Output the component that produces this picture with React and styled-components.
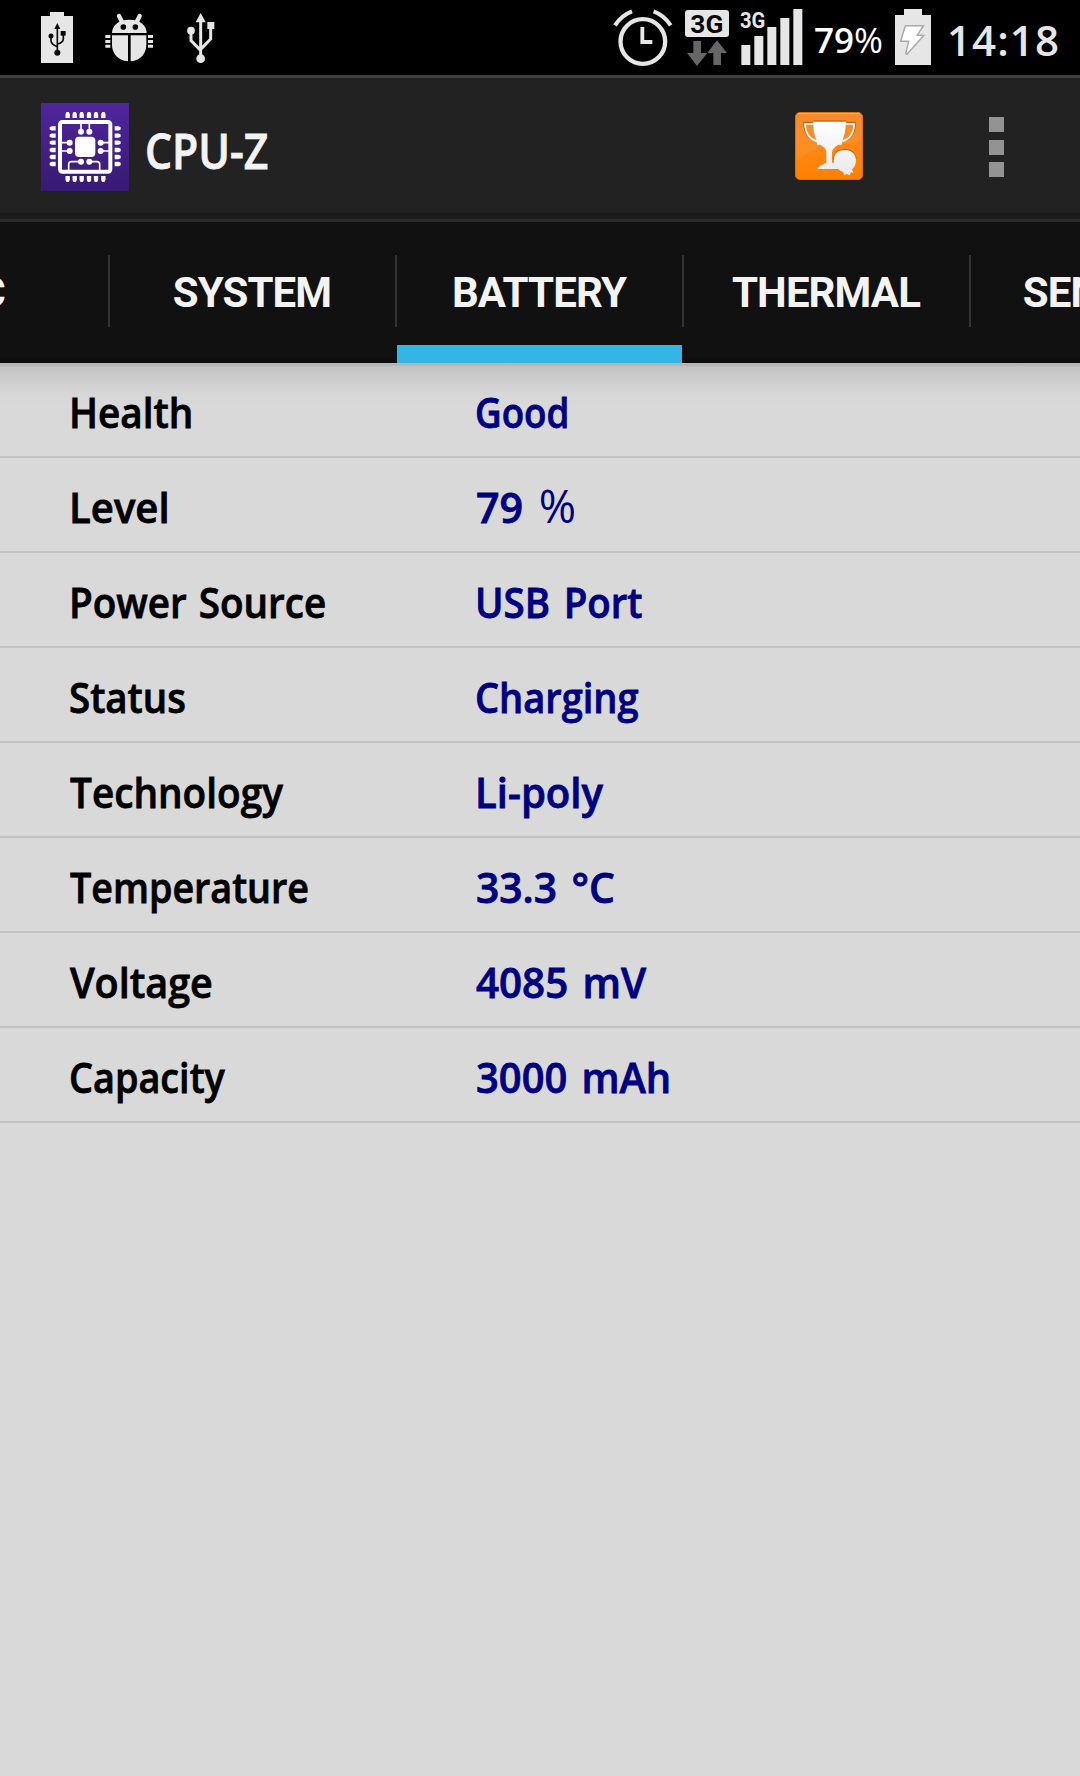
import React from 'react';
import styled, { createGlobalStyle } from 'styled-components';

const GlobalStyle = createGlobalStyle`
  html, body { margin: 0; padding: 0; background: #d9d9d9; }
  * { box-sizing: border-box; }
`;

const Screen = styled.div`
  width: 1080px;
  height: 1776px;
  display: flex;
  flex-direction: column;
  overflow: hidden;
  background: #d9d9d9;
  font-family: 'Open Sans', 'Noto Sans', sans-serif;
`;

const StatusBar = styled.div`
  height: 75px;
  flex: none;
  display: flex;
  justify-content: space-between;
  padding: 0 21px 0 41px;
  background: #000;
`;

const StatusGroup = styled.div`
  display: flex;
  height: 75px;
`;

const Glyph = styled.svg`
  display: block;
  flex: none;
  width: ${(p) => p.$w}px;
  height: ${(p) => p.$h}px;
  margin-top: ${(p) => p.$top || 0}px;
  margin-right: ${(p) => p.$gap || 0}px;
`;

const Squeeze = styled.span`
  display: inline-block;
  white-space: nowrap;
  transform: scaleX(${(p) => p.$scale || 1});
  transform-origin: 0 50%;
  margin-left: ${(p) => p.$nudge || 0}px;
  -webkit-text-stroke: 0.8px currentColor;
`;

const Percent = styled.div`
  width: 81px;
  padding-top: 16px;
  font-size: 35px;
  line-height: 48px;
  font-weight: 600;
  color: #fff;
  white-space: nowrap;
`;

const LightSign = styled.span`
  font-weight: 400;
  font-size: ${(p) => p.$size || 'inherit'};
  line-height: 1;
  -webkit-text-stroke: 0;
`;

const Clock = styled.div`
  width: 112px;
  padding-top: 12px;
  font-size: 42px;
  line-height: 56px;
  font-weight: 600;
  letter-spacing: 1.1px;
  color: #e6e6e6;
  white-space: nowrap;
`;

const ActionBar = styled.header`
  height: 147px;
  flex: none;
  display: flex;
  align-items: flex-start;
  border-top: 3px solid #404040;
  border-bottom: 3px solid #2b2b2b;
  padding: 25px 76px 0 41px;
  background: linear-gradient(#222 135px, #1b1b1b 135px);
`;

const Title = styled.h1`
  flex: 1;
  margin: 0 0 0 16px;
  padding-top: 15px;
  font-size: 48px;
  line-height: 66px;
  font-weight: 600;
  color: #f3f3f3;
`;

const Overflow = styled.div`
  display: flex;
  flex-direction: column;
  gap: 7.5px;
  margin: 14px 0 0 126px;
`;

const Dot = styled.i`
  width: 15px;
  height: 15px;
  background: #939393;
`;

const TabBar = styled.nav`
  height: 141px;
  flex: none;
  display: flex;
  margin-left: -177px;
  width: 1440px;
  background: linear-gradient(#111 134px, #0b0b0b);
`;

const Tab = styled.div`
  width: 287px;
  flex: none;
  display: flex;
  flex-direction: column;
  align-items: stretch;
  height: 141px;
`;

const TabLabel = styled.div`
  height: 72px;
  margin-top: 33px;
  border-right: 2px solid #333;
  text-align: center;
  font: 700 42px/72px Roboto, sans-serif;
  letter-spacing: -0.9px;
  padding: 2px 1px 0 0;
  color: #f3f3f3;
`;

const TabMark = styled.div`
  height: 18px;
  margin: 18px 2px 0 0;
  background: ${(p) => (p.$active ? '#33b5e5' : 'transparent')};
`;

const List = styled.main`
  flex: 1;
  background: linear-gradient(#b5b5b5 3px, #c1c1c1 3px, #cdcdcd 16px, #d6d6d6 30px, #d9d9d9 42px);
`;

const Row = styled.div`
  height: 95px;
  display: grid;
  grid-template-columns: 406px 1fr;
  padding: 20px 0 0 68.5px;
  border-bottom: 2px solid #c2c2c2;
  font-size: 42px;
  line-height: 58px;
  font-weight: 600;
`;

const Label = styled.div`
  color: #000;
  word-spacing: 2px;
`;

const Value = styled.div`
  color: #000080;
  word-spacing: 4px;
`;

const INK = '#e6e6e6';

const BatteryUsb = () => (
  <Glyph $w={32} $h={51} $top={12} $gap={32} viewBox="123 36 96 153">
    <path d="M150 36h42v12h27v141h-96V48h27z" fill={INK} />
    <g fill="#0c0c0c" stroke="none">
      <path d="M172 69l9 18h-18z" />
      <circle cx="153" cy="108" r="7.5" />
      <rect x="182" y="93" width="15" height="14" />
      <circle cx="172" cy="158" r="9" />
    </g>
    <path d="M172 84v70M153 108v14q0 10 19 18M190 104v12q0 12-18 16" fill="none" stroke="#0c0c0c" strokeWidth="5" />
  </Glyph>
);

const Bug = () => (
  <Glyph $w={48} $h={49} $top={13} $gap={34} viewBox="315 39 144 147">
    <path d="M336 99c0-22 18-40 52-40s52 18 52 40z" fill={INK} />
    <path d="M357 48l9 18M419 48l-9 18" stroke={INK} strokeWidth="13" strokeLinecap="round" />
    <circle cx="370" cy="81" r="8.5" fill="#000" />
    <circle cx="406" cy="81" r="8.5" fill="#000" />
    <path d="M336 106h48v78c-32-3-48-26-48-50zM392 106h47v28c0 24-15 47-47 50z" fill={INK} />
    <path d="M316 105h15v9h-15zM316 120h15v9h-15zM316 134h15v9h-15zM444 105h15v9h-15zM444 120h15v9h-15zM444 134h15v9h-15z" fill={INK} />
  </Glyph>
);

const Usb = () => (
  <Glyph $w={28} $h={51} $top={13} viewBox="560 39 84 153">
    <path d="M601 39l15 28h-30z" fill={INK} />
    <circle cx="572" cy="92" r="11.5" fill={INK} />
    <rect x="621" y="66" width="21" height="21" fill={INK} />
    <circle cx="601" cy="176" r="13" fill={INK} />
    <path d="M601 60v110M572 95v27l29 29M631 82v35l-30 31" fill="none" stroke={INK} strokeWidth="9" />
  </Glyph>
);

const Alarm = () => (
  <Glyph $w={60} $h={58} $top={9} $gap={12} viewBox="71 27 180 174">
    <g fill="none" stroke={INK}>
      <circle cx="160.500" cy="124.500" r="67" strokeWidth="13" />
      <path d="M159 81v45h30" strokeWidth="11.500" />
      <path d="M77 76Q96 46 128 34M244 76Q225 46 193 34" strokeWidth="12" />
    </g>
  </Glyph>
);

const DataIcon = () => (
  <Glyph $w={44} $h={58} $top={9} $gap={11} viewBox="288 27 132 174">
    <rect x="288" y="30" width="132" height="81" rx="9" fill={INK} />
    <text x="304" y="98" fontFamily="Roboto, sans-serif" fontWeight="700" fontSize="77" textLength="99" lengthAdjust="spacingAndGlyphs" fill="#050505">3G</text>
    <path d="M313 123h23v36h19l-31 39-30-39h19zM373 195v-36h-18l29-38 30 38h-18v36z" fill="#666" />
  </Glyph>
);

const Signal = () => (
  <Glyph $w={63} $h={58} $top={9} $gap={11} viewBox="452 27 189 174">
    <text x="452" y="83" fontFamily="Roboto, sans-serif" fontWeight="700" fontSize="65" textLength="76" lengthAdjust="spacingAndGlyphs" fill={INK}>3G</text>
    <path d="M456 135h27v60h-27zM495 108h27v87h-27zM534 81h27v114h-27zM573 54h27v141h-27zM612 27h27v168h-27z" fill={INK} />
  </Glyph>
);

const BatteryCharge = () => (
  <Glyph $w={36} $h={56} $top={9} $gap={16} viewBox="198 27 108 168">
    <path d="M225 27h54v18h27v150H198V45h27z" fill={INK} />
    <path d="M229 77h55l-20 29h21l-51 57-4-3 9-36h-24z" fill="#fff" stroke="#aaa" strokeWidth="4.500" strokeLinejoin="round" />
  </Glyph>
);

const pins = [203, 224, 245, 267, 288, 310];
const sidePins = [385, 407, 428, 450, 471, 492];

const Chip = () => (
  <Glyph $w={88} $h={88} viewBox="123 309 264 264">
    <defs>
      <linearGradient id="chipBg" x1="0" y1="0" x2="0" y2="1">
        <stop offset="0" stopColor="#50269c" />
        <stop offset="1" stopColor="#371a72" />
      </linearGradient>
    </defs>
    <rect x="123" y="309" width="264" height="264" fill="url(#chipBg)" />
    <g fill="#fff">
      {pins.map((x) => (
        <React.Fragment key={x}>
          <path d={`M${x - 6.5} 354v-12l3-6h7l3 6v12z`} />
          <path d={`M${x - 6.5} 528v12l3 6h7l3-6v-12z`} />
        </React.Fragment>
      ))}
      {sidePins.map((y) => (
        <React.Fragment key={y}>
          <path d={`M167 ${y - 6.5}h-12l-6 3v7l6 3h12z`} />
          <path d={`M344 ${y - 6.5}h12l6 3v7l-6 3h-12z`} />
        </React.Fragment>
      ))}
      <rect x="225" y="410" width="61" height="61" rx="12" />
      <circle cx="243" cy="395" r="9" />
      <circle cx="268" cy="395" r="9" />
      <circle cx="209" cy="428" r="9" />
      <circle cx="209" cy="453" r="9" />
      <circle cx="302" cy="428" r="9" />
      <circle cx="302" cy="453" r="9" />
      <circle cx="243" cy="485" r="9" />
      <circle cx="268" cy="485" r="9" />
    </g>
    <g fill="none" stroke="#fff">
      <rect x="180" y="366" width="151" height="149" rx="7" strokeWidth="12" />
      <path d="M243 368v24M268 368v24M184 428h22M184 453h22M305 428h22M305 453h22M240 485h-26q-8 0-8 8v20M271 485h20q8 0 8 8v20" strokeWidth="5" />
    </g>
  </Glyph>
);

const TrophyBox = styled.div`
  padding-top: 9px;
`;

const Trophy = () => (
  <TrophyBox>
    <Glyph $w={68} $h={68} viewBox="75 67 204 204">
      <defs>
        <linearGradient id="cupBg" x1="0" y1="0" x2="0" y2="1">
          <stop offset="0" stopColor="#f58a2c" />
          <stop offset="0.550" stopColor="#fb8f25" />
          <stop offset="1" stopColor="#ff8400" />
        </linearGradient>
        <linearGradient id="cupFill" x1="0" y1="0" x2="0" y2="1">
          <stop offset="0" stopColor="#fff" />
          <stop offset="1" stopColor="#e9e9e9" />
        </linearGradient>
      </defs>
      <rect x="76.500" y="68.500" width="201" height="201" rx="13" fill="url(#cupBg)" stroke="#d9730f" strokeWidth="3" />
      <path d="M78 214q70-50 128-50 42 0 70-12v104q0 12-12 12H90q-12 0-12-12z" fill="#ff7d00" opacity="0.450" />
      <path d="M84 72h186" stroke="#ffb061" strokeWidth="3" />
      <g fill="none" stroke="#9c5216" strokeWidth="5" opacity="0.600">
        <path d="M134 99h-32q0 45 38 54M225 99h31q0 45-38 54" />
        <path d="M130 94h98M192 212q0-32 34-32 27 0 32 28" />
      </g>
      <path d="M134 103h-29q2 42 36 52M225 103h28q-2 42-36 52" fill="none" stroke="#fff" strokeWidth="5" />
      <path d="M130 96h98c-1 24-5 42-11 57l-2 13-10-1q-18 11-19 22v31l6 3q-5-40 34-40c22 0 32 16 32 31 0 12-4 20-12 27l4 10-7-1-4 9-9-4-8 3-2-9q-8-2-15-9h-63q6-11 27-19v-32q0-12-18-22l-10 1-1-13c-7-15-11-33-10-57z" fill="url(#cupFill)" />
    </Glyph>
  </TrophyBox>
);

const tabs = ['SOC', 'SYSTEM', 'BATTERY', 'THERMAL', 'SENSORS'];

const rows = [
  { label: 'Health', ls: 0.92, value: 'Good', vs: 0.875, vn: 0.5 },
  { label: 'Level', ls: 0.955, value: '79', vs: 0.98, vn: 1, sign: '%' },
  { label: 'Power Source', ls: 0.92, value: 'USB Port', vs: 0.915, vn: 0.5 },
  { label: 'Status', ls: 0.915, ln: 0.5, value: 'Charging', vs: 0.905, vn: 0.5 },
  { label: 'Technology', ls: 0.922, ln: 1, value: 'Li-poly', vs: 0.955, vn: 0.5 },
  { label: 'Temperature', ls: 0.897, ln: 1, value: '33.3 °C', vs: 0.97, vn: 1.5 },
  { label: 'Voltage', ls: 0.94, ln: 1, value: '4085 mV', vs: 0.96, vn: 1.5 },
  { label: 'Capacity', ls: 0.9, ln: 0.5, value: '3000 mAh', vs: 0.95, vn: 1.5 },
];

export default function App() {
  return (
    <Screen>
      <GlobalStyle />
      <StatusBar>
        <StatusGroup>
          <BatteryUsb />
          <Bug />
          <Usb />
        </StatusGroup>
        <StatusGroup>
          <Alarm />
          <DataIcon />
          <Signal />
          <Percent>
            79<LightSign>%</LightSign>
          </Percent>
          <BatteryCharge />
          <Clock>14:18</Clock>
        </StatusGroup>
      </StatusBar>
      <ActionBar>
        <Chip />
        <Title>
          <Squeeze $scale={0.89}>CPU-Z</Squeeze>
        </Title>
        <Trophy />
        <Overflow>
          <Dot />
          <Dot />
          <Dot />
        </Overflow>
      </ActionBar>
      <TabBar>
        {tabs.map((t) => (
          <Tab key={t}>
            <TabLabel>{t}</TabLabel>
            <TabMark $active={t === 'BATTERY'} />
          </Tab>
        ))}
      </TabBar>
      <List>
        {rows.map((r) => (
          <Row key={r.label}>
            <Label>
              <Squeeze $scale={r.ls} $nudge={r.ln}>{r.label}</Squeeze>
            </Label>
            <Value>
              <Squeeze $scale={r.vs} $nudge={r.vn}>
                {r.value}
                {r.sign && <LightSign $size="46px"> {r.sign}</LightSign>}
              </Squeeze>
            </Value>
          </Row>
        ))}
      </List>
    </Screen>
  );
}
